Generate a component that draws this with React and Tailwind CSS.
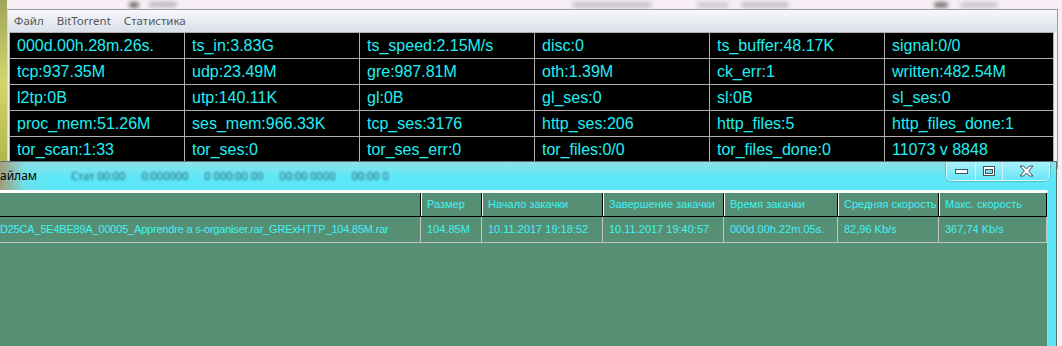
import React from "react";

const stats = [
  ["000d.00h.28m.26s.", "ts_in:3.83G", "ts_speed:2.15M/s", "disc:0", "ts_buffer:48.17K", "signal:0/0"],
  ["tcp:937.35M", "udp:23.49M", "gre:987.81M", "oth:1.39M", "ck_err:1", "written:482.54M"],
  ["l2tp:0B", "utp:140.11K", "gl:0B", "gl_ses:0", "sl:0B", "sl_ses:0"],
  ["proc_mem:51.26M", "ses_mem:966.33K", "tcp_ses:3176", "http_ses:206", "http_files:5", "http_files_done:1"],
  ["tor_scan:1:33", "tor_ses:0", "tor_ses_err:0", "tor_files:0/0", "tor_files_done:0", "11073 v 8848"],
];

const cols = [
  { title: "", w: "w-[421px]" },
  { title: "Размер", w: "w-[61px]" },
  { title: "Начало закачки", w: "w-[121px]" },
  { title: "Завершение закачки", w: "w-[121px]" },
  { title: "Время закачки", w: "w-[114px]" },
  { title: "Средняя скорость", w: "w-[101px]" },
  { title: "Макс. скорость", w: "w-[108px]" },
];

const row = [
  "D25CA_5E4BE89A_00005_Apprendre a s-organiser.rar_GRExHTTP_104.85M.rar",
  "104.85M",
  "10.11.2017 19:18:52",
  "10.11.2017 19:40:57",
  "000d.00h.22m.05s.",
  "82,96 Kb/s",
  "367,74 Kb/s",
];

const sans = { fontFamily: '"Liberation Sans", Arial, sans-serif' };
const ui = { fontFamily: '"Noto Sans", "Open Sans", sans-serif' };

const StatsGrid = () => (
  <div className="ml-[1px] w-[1045px] grid grid-cols-[repeat(5,175px)_169px] border-l border-t border-[#b0b0b0] bg-black" style={sans}>
    {stats.flat().map((s, i) => (
      <div key={i} className="h-[26px] border-r border-b border-[#b0b0b0] pl-[7px] flex items-center text-[16px] text-[#22eef2] whitespace-nowrap overflow-hidden">
        {s}
      </div>
    ))}
  </div>
);

const CaptionButtons = () => (
  <div className="flex h-[19px] rounded-b-[5px] border border-t-0 border-[#e8fbfd] shadow-[0_0_0_1px_rgba(60,110,120,0.35)] overflow-hidden">
    <div className="w-[29px] flex items-center justify-center border-r border-[#d8f4f8] bg-gradient-to-b from-[#a8f0fa] to-[#62e6f7]">
      <svg width="13" height="5" viewBox="0 0 13 5">
        <rect x="0.5" y="0.5" width="12" height="4" fill="#fff" stroke="#3f5258" />
      </svg>
    </div>
    <div className="w-[27px] flex items-center justify-center border-r border-[#d8f4f8] bg-gradient-to-b from-[#a8f0fa] to-[#62e6f7]">
      <svg width="12" height="10" viewBox="0 0 12 10">
        <rect x="0.5" y="0.5" width="11" height="9" fill="#fff" stroke="#3f5258" />
        <rect x="2.5" y="3.5" width="7" height="4" fill="#7fd9e6" stroke="#3f5258" />
      </svg>
    </div>
    <div className="w-[46px] flex items-center justify-center bg-gradient-to-b from-[#a8f0fa] to-[#62e6f7]">
      <svg width="15" height="12" viewBox="0 0 15 12">
        <path d="M1 1h3.5l3 3 3-3H14l-4.3 5 4.3 5h-3.5l-3-3-3 3H1l4.3-5z" fill="#fff" stroke="#3f5258" strokeWidth="1" strokeLinejoin="round" />
      </svg>
    </div>
  </div>
);

export default function App() {
  return (
    <div className="relative w-[1062px] h-[346px] overflow-hidden bg-[#f7eff5]">
      <div className="flex h-[9px] items-center">
        <div className="w-[7px] h-[161px] self-start bg-gradient-to-b from-[#9fa55a] via-[#d4d56c] to-[#b3b64c]" />
        <div className="ml-[122px] w-[10px] h-[6px] rounded bg-[#6b6b6b] blur-[2px]" />
        <div className="ml-[10px] w-[28px] h-[5px] rounded bg-[#b9b4bb] blur-[2px]" />
        <div className="ml-[395px] w-[80px] h-[6px] rounded bg-[#c9c2c9] blur-[2px]" />
        <div className="ml-[45px] w-[32px] h-[6px] rounded bg-[#cfc7cf] blur-[2px]" />
        <div className="ml-[12px] w-[48px] h-[6px] rounded bg-[#c6bfc6] blur-[2px]" />
        <div className="ml-[145px] w-[14px] h-[6px] rounded bg-[#777] blur-[2px]" />
        <div className="ml-[12px] w-[38px] h-[6px] rounded bg-[#cbc4cb] blur-[2px]" />
      </div>

      <div className="absolute left-[7px] top-[9px] w-[1051px] h-[160px] border border-[#9c9c9c] border-l-[#d8d8d0] bg-[#f2f2f2]">
        <div className="h-[22px] flex items-center gap-[13px] pl-[6px] text-[11.5px] text-[#555] bg-gradient-to-b from-[#f7f8fb] to-[#d9e0ea]" style={ui}>
          <span>Файл</span>
          <span>BitTorrent</span>
          <span>Статистика</span>
        </div>
        <StatsGrid />
      </div>

      <div className="absolute left-0 top-[161px] w-[1057px] h-[200px] border-t border-r border-[#5d6e74] bg-[#5ae6f6]">
        <div className="h-[28px] flex items-start bg-gradient-to-b from-[#8edfe9] via-[#5ee8f8] to-[#5ae6f6]">
          <div className="h-full flex items-center bg-gradient-to-r from-[#a39c78] via-[#7fd8dc]/40 to-transparent pr-[12px]">
            <span className="text-[12px] text-black" style={ui}>айлам</span>
          </div>
          <div className="h-full flex items-center gap-[16px] pl-[22px] text-[11px] text-[#2f6474] blur-[1.3px]" style={ui}>
            <span>Стат 00:00</span>
            <span>0:000000</span>
            <span>0 000:00 00</span>
            <span>00:00 0000</span>
            <span>00:00 0</span>
          </div>
          <div className="ml-auto mr-[6px]">
            <CaptionButtons />
          </div>
        </div>
        <div className="w-[1048px] h-[200px] border-t-[3px] border-white border-r border-r-[#b8c8cc] bg-[#578f74]" style={sans}>
          <div className="flex h-[24px] border-b border-black">
            {cols.map((c, i) => (
              <div key={i} className={`${c.w} shrink-0 border-r border-black ${i > 0 ? "border-l border-l-white pl-[5px]" : ""} flex items-center text-[11px] text-[#3ff2f6] whitespace-nowrap overflow-hidden`}>
                {c.title}
              </div>
            ))}
          </div>
          <div className="flex h-[26px] border-b border-[#c4c4c4]">
            {cols.map((c, i) => (
              <div key={i} className={`${c.w} shrink-0 border-r border-[#c4c4c4] ${i > 0 ? "pl-[6px]" : "tracking-[-0.2px]"} flex items-center text-[11px] text-[#3ff2f6] whitespace-nowrap overflow-hidden`}>
                {row[i]}
              </div>
            ))}
          </div>
        </div>
      </div>
    </div>
  );
}
